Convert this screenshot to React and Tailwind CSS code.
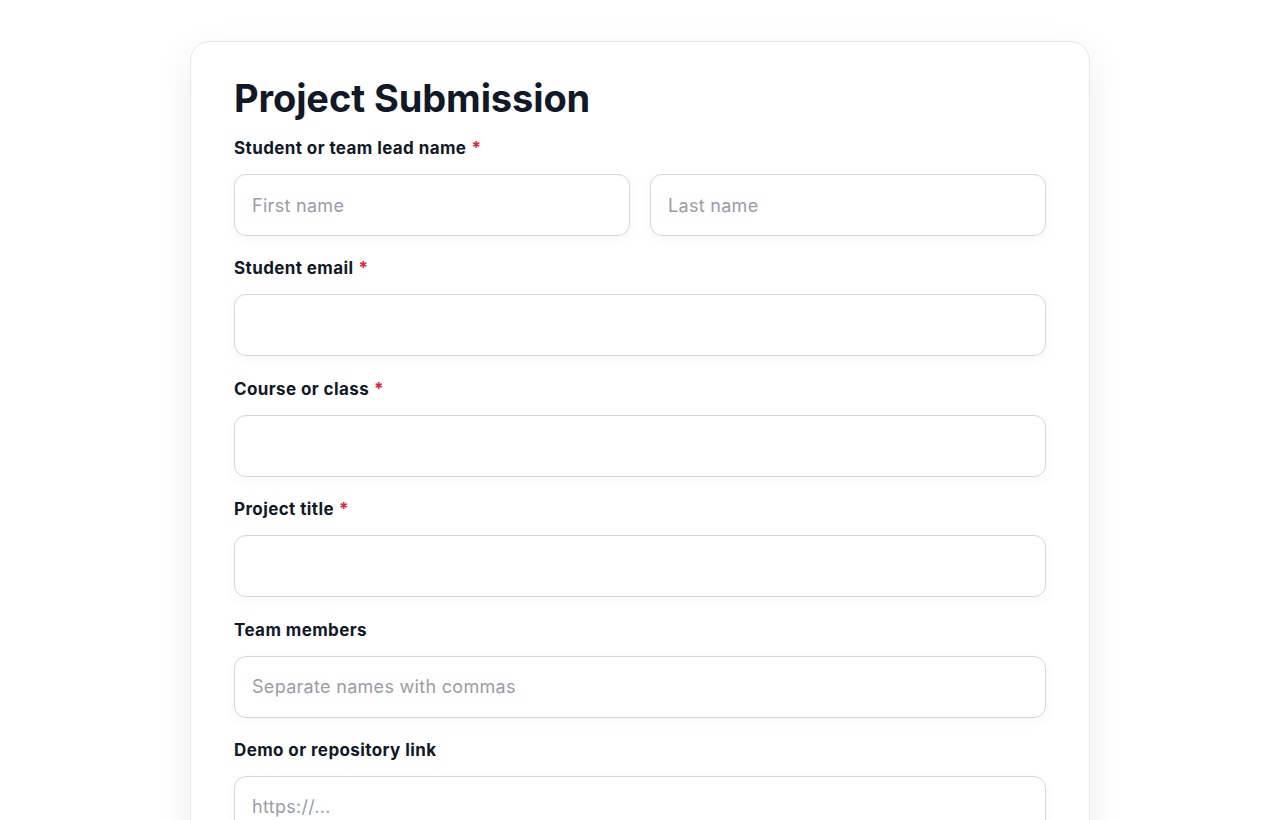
import React from 'react';

const font = { fontFamily: 'Inter, "Noto Sans", sans-serif' };

function Label({ children, required }) {
    return (
        <label className="block text-[17px] leading-6 font-bold text-[#111827] tracking-[0.4px] mb-[14px]">
            {children}
            {required && <span className="text-[#e0243a] ml-[5px]">*</span>}
        </label>
    );
}

function Input({ placeholder }) {
    return (
        <input
            type="text"
            placeholder={placeholder}
            className="w-full h-[62px] px-[17px] rounded-xl border border-[#d4d6dd] bg-white text-[18px] tracking-[0.3px] text-gray-900 placeholder:text-[#9a9ca6] shadow-[0_4px_14px_rgba(17,24,39,0.035)] focus:outline-none"
        />
    );
}

export default function App() {
    return (
        <div className="min-h-screen bg-white pt-[41px]" style={font}>
            <div className="w-[900px] mx-auto bg-white border border-[#e6e7eb] rounded-[20px] shadow-[0_12px_40px_rgba(17,24,39,0.07)] px-[43px] pt-[33px] pb-10">
                <h1 className="text-[38px] leading-[46px] font-bold text-[#111827] tracking-[-0.1px] mb-[15px]">Project Submission</h1>

                <div className="flex flex-col gap-[20.4px]">
                    <div>
                        <Label required>Student or team lead name</Label>
                        <div className="grid grid-cols-2 gap-5">
                            <Input placeholder="First name" />
                            <Input placeholder="Last name" />
                        </div>
                    </div>
                    <div>
                        <Label required>Student email</Label>
                        <Input />
                    </div>
                    <div>
                        <Label required>Course or class</Label>
                        <Input />
                    </div>
                    <div>
                        <Label required>Project title</Label>
                        <Input />
                    </div>
                    <div>
                        <Label>Team members</Label>
                        <Input placeholder="Separate names with commas" />
                    </div>
                    <div>
                        <Label>Demo or repository link</Label>
                        <Input placeholder="https://..." />
                    </div>
                </div>
            </div>
        </div>
    );
}
